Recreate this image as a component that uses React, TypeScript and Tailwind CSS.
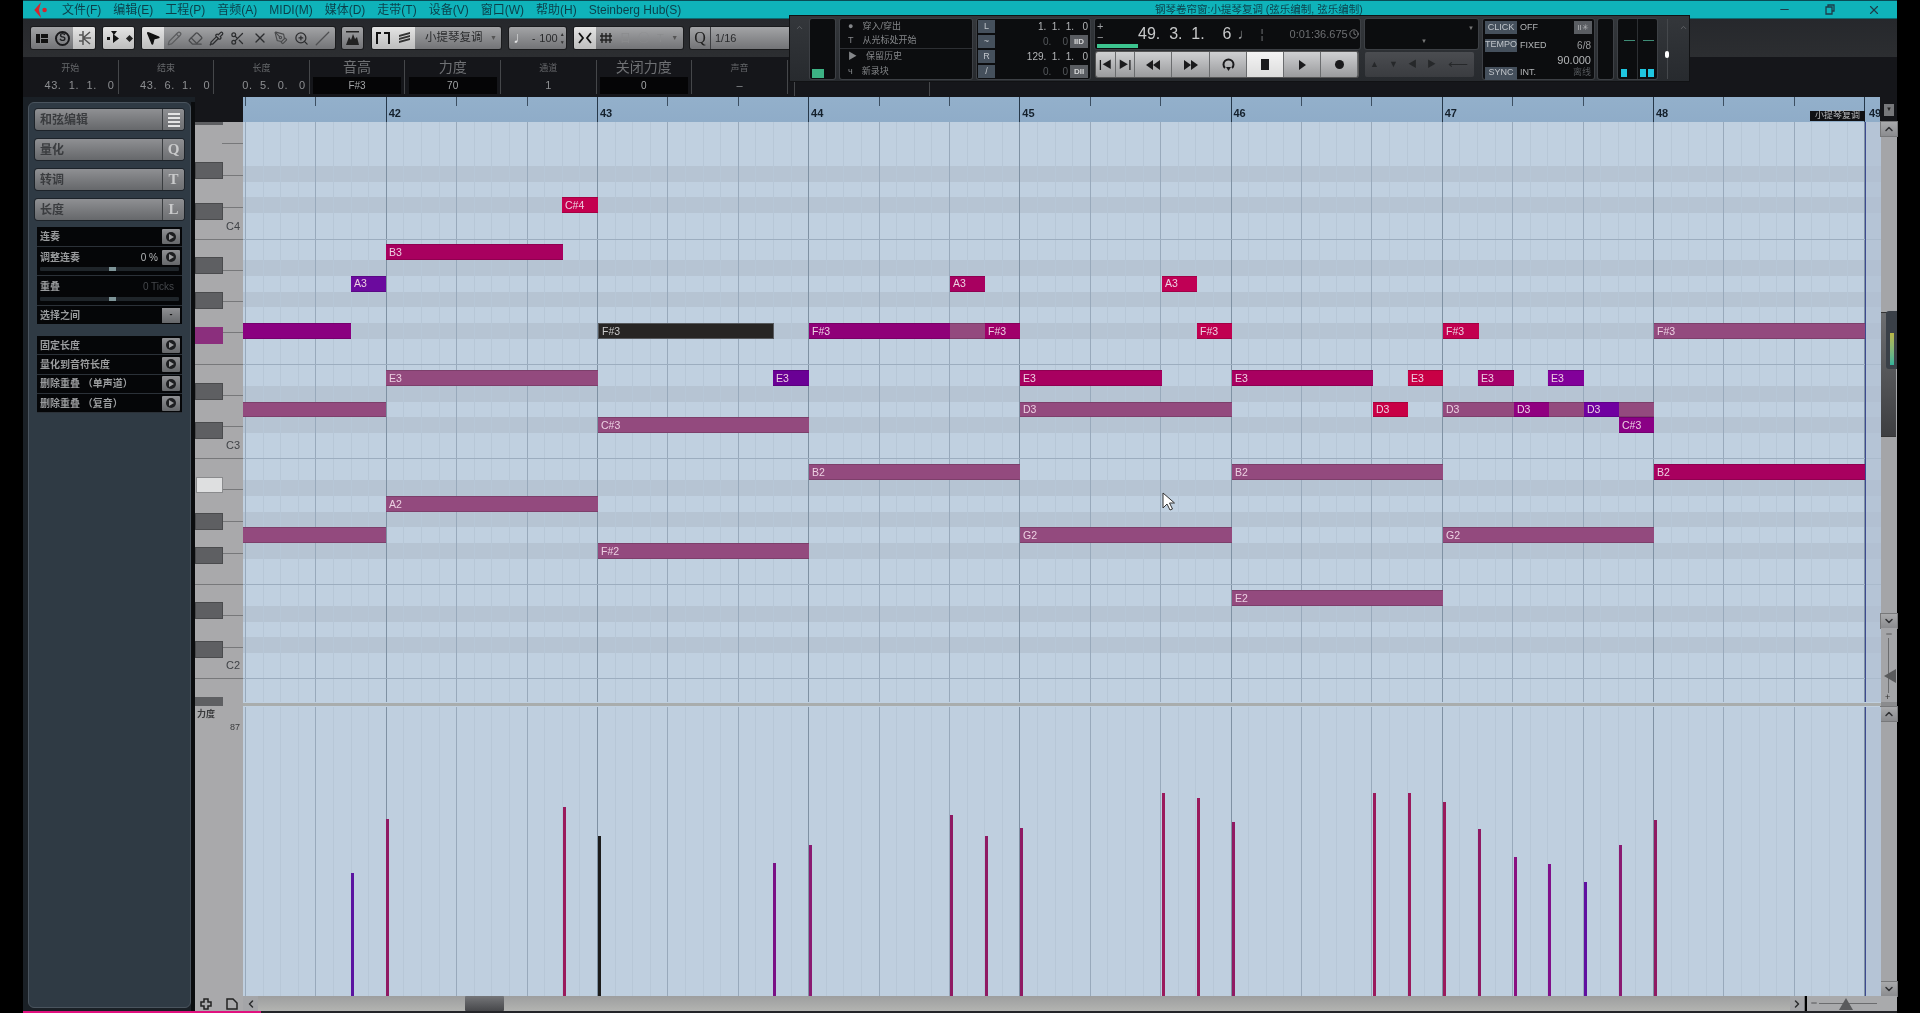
import React from "react";
import {
  ChevronDown,
  ChevronLeft,
  ChevronRight,
  ChevronUp,
  Eraser,
  MousePointer2,
  Pencil,
  Pipette,
  Scissors,
  Slash,
  X,
  ZoomIn,
  PenTool,
  Minus,
  Clock,
} from "lucide-react";

const FONT = { fontFamily: '"Liberation Sans", "Noto Sans CJK SC", sans-serif' };

const GRID_LEFT = 243;
const GRID_TOP = 122;
const ROW = 15.72;
const ROW_ZERO = 323;
const BAR_42 = 385.7;
const BAR = 211.2;
const SIXTEENTH = BAR / 12;

const PALE = "#934a7e";

const menus = ["文件(F)", "编辑(E)", "工程(P)", "音频(A)", "MIDI(M)", "媒体(D)", "走带(T)", "设备(V)", "窗口(W)", "帮助(H)", "Steinberg Hub(S)"];

const notes: { n: number; a: number; b: number; t?: string; c: string }[] = [
  { n: -8, a: 562, b: 598, t: "C#4", c: "#c4004f" },
  { n: -5, a: 386, b: 563, t: "B3", c: "#a8005f" },
  { n: -3, a: 351, b: 386, t: "A3", c: "#6b0a9e" },
  { n: -3, a: 950, b: 985, t: "A3", c: "#a80060" },
  { n: -3, a: 1162, b: 1197, t: "A3", c: "#c00055" },
  { n: 0, a: 243, b: 351, c: "#8a0080" },
  { n: 0, a: 809, b: 950, t: "F#3", c: "#8f0078" },
  { n: 0, a: 950, b: 985, c: PALE },
  { n: 0, a: 985, b: 1020, t: "F#3", c: "#a0006a" },
  { n: 0, a: 1197, b: 1232, t: "F#3", c: "#c00050" },
  { n: 0, a: 1443, b: 1479, t: "F#3", c: "#c2004f" },
  { n: 0, a: 1654, b: 1865, t: "F#3", c: PALE },
  { n: 3, a: 386, b: 598, t: "E3", c: PALE },
  { n: 3, a: 773, b: 809, t: "E3", c: "#6a0095" },
  { n: 3, a: 1020, b: 1162, t: "E3", c: "#a80060" },
  { n: 3, a: 1232, b: 1373, t: "E3", c: "#a80060" },
  { n: 3, a: 1408, b: 1443, t: "E3", c: "#c80045" },
  { n: 3, a: 1478, b: 1514, t: "E3", c: "#a5006a" },
  { n: 3, a: 1548, b: 1584, t: "E3", c: "#82009a" },
  { n: 5, a: 243, b: 386, c: PALE },
  { n: 5, a: 1020, b: 1232, t: "D3", c: PALE },
  { n: 5, a: 1373, b: 1408, t: "D3", c: "#c80045" },
  { n: 5, a: 1443, b: 1654, t: "D3", c: PALE },
  { n: 5, a: 1514, b: 1549, t: "D3", c: "#900080" },
  { n: 5, a: 1584, b: 1619, t: "D3", c: "#7000a0" },
  { n: 6, a: 598, b: 809, t: "C#3", c: PALE },
  { n: 6, a: 1619, b: 1654, t: "C#3", c: "#8a0085" },
  { n: 9, a: 809, b: 1020, t: "B2", c: PALE },
  { n: 9, a: 1232, b: 1443, t: "B2", c: PALE },
  { n: 9, a: 1654, b: 1865, t: "B2", c: "#a8005f" },
  { n: 11, a: 386, b: 598, t: "A2", c: PALE },
  { n: 13, a: 243, b: 386, c: PALE },
  { n: 13, a: 1020, b: 1232, t: "G2", c: PALE },
  { n: 13, a: 1443, b: 1654, t: "G2", c: PALE },
  { n: 14, a: 598, b: 809, t: "F#2", c: PALE },
  { n: 17, a: 1232, b: 1443, t: "E2", c: PALE },
];

const bars: { x: number; top: number; c: string }[] = [
  { x: 351, top: 873, c: "#5b14a0" },
  { x: 386, top: 819, c: "#8f1a63" },
  { x: 563, top: 807, c: "#9a1a5c" },
  { x: 598, top: 836, c: "#1c1c1c" },
  { x: 773, top: 863, c: "#7a1085" },
  { x: 809, top: 845, c: "#8a1a72" },
  { x: 950, top: 815, c: "#8f1a63" },
  { x: 985, top: 836, c: "#8f1a63" },
  { x: 1020, top: 828, c: "#8f1a63" },
  { x: 1162, top: 793, c: "#9a1a5c" },
  { x: 1197, top: 798, c: "#9a1a5c" },
  { x: 1232, top: 822, c: "#8f1a63" },
  { x: 1373, top: 793, c: "#9a1a5c" },
  { x: 1408, top: 793, c: "#9a1a5c" },
  { x: 1443, top: 802, c: "#9a1a5c" },
  { x: 1478, top: 829, c: "#8f1a63" },
  { x: 1514, top: 857, c: "#8a1080" },
  { x: 1548, top: 864, c: "#80108a" },
  { x: 1584, top: 882, c: "#6010a0" },
  { x: 1619, top: 845, c: "#8a1a72" },
  { x: 1654, top: 820, c: "#8f1a63" },
];

const bandRows = [-10, -8, -4, -2, 0, 4, 6, 10, 12, 14, 18, 20];
const longLines = [239, 364, 457.5, 584, 678];
const shortLines = [143, 175, 207, 270, 301, 332, 395, 426, 489, 521, 553, 615, 647];
const blackKeys = [162, 203, 257, 292, 383, 422, 513, 547, 602, 641];

const sixteenths = Array.from({ length: 93 }, (_, i) => i);

function GridLines({ height }: { height: number }) {
  return (
    <>
      {sixteenths.map((i) => {
        const x = BAR_42 - 2 * 4 * SIXTEENTH + i * SIXTEENTH - GRID_LEFT;
        if (x < 0 || x > 1622) return null;
        const isBar = i % 12 === 8;
        const isBeat = i % 4 === 0;
        return (
          <div
            key={i}
            className={`absolute top-0 w-px ${isBar ? "bg-[#7f91a3]" : isBeat ? "bg-[#98a9bb]" : "bg-[#b7c7d7]"}`}
            style={{ left: x, height }}
          />
        );
      })}
    </>
  );
}

function Seg({ light, w, children }: { light?: boolean; w?: string; children?: React.ReactNode }) {
  return (
    <div
      className={`flex h-full items-center justify-center ${w ?? ""} ${
        light ? "bg-linear-to-b from-[#e4e4e4] to-[#bdbdbd]" : ""
      }`}
    >
      {children}
    </div>
  );
}

function ToolGroup({ w, children }: { w: string; children: React.ReactNode }) {
  return (
    <div className={`flex h-[22px] shrink-0 items-center overflow-hidden rounded-[2px] bg-linear-to-b from-[#a3a4a6] to-[#737477] shadow-[0_0_0_1px_#1a1b1d] ${w}`}>
      {children}
    </div>
  );
}

function InfoCol({ label, big, value, boxed }: { label: string; big?: boolean; value: string; boxed?: boolean }) {
  return (
    <div className="relative flex h-[34px] w-[95.6px] shrink-0 flex-col items-center justify-between border-r border-[#45474a]">
      <span className={big ? "-mt-[1px] text-[14px] leading-[17px] text-[#6f7174]" : "mt-[3px] text-[9px] leading-[11px] text-[#66686b]"}>{label}</span>
      {boxed ? (
        <div className="flex h-[17px] w-[88px] items-center justify-center bg-[#050506] text-[10px] text-[#a4a6a8]">{value}</div>
      ) : (
        <div className="flex h-[17px] w-full items-center justify-center whitespace-pre text-[11px] text-[#8d8f92]">{value}</div>
      )}
    </div>
  );
}

function TimeCol({ label, value }: { label: string; value: string }) {
  return (
    <div className="flex h-[34px] w-[95.6px] shrink-0 flex-col items-center justify-between border-r border-[#45474a]">
      <span className="mt-[3px] text-[9px] leading-[11px] text-[#66686b]">{label}</span>
      <div className="flex h-[17px] w-full items-center justify-end whitespace-pre pr-[3px] text-[11px] tracking-[0.6px] text-[#8d8f92]">{value}</div>
    </div>
  );
}

function InspectorButton({ label, icon }: { label: string; icon: React.ReactNode }) {
  return (
    <div className="flex h-[21px] w-[149px] shrink-0 overflow-hidden rounded-[3px] bg-linear-to-b from-[#8f9093] to-[#66686b] shadow-[0_0_0_1px_#1d2329]">
      <div className="flex flex-1 items-center pl-[5px] text-[12px] font-bold text-[#3a3c3f]">{label}</div>
      <div className="flex w-[22px] items-center justify-center border-l border-[#3a3d40] bg-linear-to-b from-[#8e8f92] to-[#6d6f72] font-['Liberation_Serif',serif] text-[15px] font-bold text-[#c9cacb]">
        {icon}
      </div>
    </div>
  );
}

function PlayBtn() {
  return (
    <div className="flex h-[15px] w-[18px] items-center justify-center rounded-[1px] bg-linear-to-b from-[#8f9093] to-[#66686b]">
      <div className="flex h-[10px] w-[10px] items-center justify-center rounded-full bg-[#1d1e20]">
        <div className="ml-[1px] h-0 w-0 border-y-[3px] border-l-[5px] border-y-transparent border-l-[#9a9b9d]" />
      </div>
    </div>
  );
}

function SectionRow({ label, btn = true, h = "h-[19.3px]" }: { label: string; btn?: boolean; h?: string }) {
  return (
    <div className={`flex items-center justify-between border-b border-[#2b3138] pr-[2px] pl-[3px] ${h}`}>
      <span className="text-[10px] font-bold text-[#9a9c9e]">{label}</span>
      {btn && <PlayBtn />}
    </div>
  );
}

function SliderTrack() {
  return (
    <div className="relative mx-[3px] h-[4px] rounded-[1px] bg-[#1f252a]">
      <div className="absolute top-0 left-[69px] h-[4px] w-[7px] bg-[#7d9498]" />
    </div>
  );
}

function Box({ className, children }: { className: string; children?: React.ReactNode }) {
  return <div className={`shrink-0 rounded-[2px] bg-[#0c0d0f] shadow-[0_0_0_1px_#3d4045] ${className}`}>{children}</div>;
}

function SmallBtn({ label, w = "w-[17px]" }: { label: string; w?: string }) {
  return (
    <div className={`flex h-[13px] items-center justify-center bg-[#45505c] text-[9px] text-[#c0c5ca] ${w}`}>{label}</div>
  );
}

function LocRow({ label, value, dim, btn }: { label: string; value: string; dim?: boolean; btn?: string }) {
  return (
    <div className="flex h-[14px] items-center gap-[2px] pr-[2px] pl-[1px]">
      <SmallBtn label={label} />
      <span className={`flex-1 whitespace-pre text-right text-[10px] ${dim ? "text-[#55585c]" : "text-[#b4b6b8]"}`}>{value}</span>
      {btn && <div className="flex h-[13px] w-[18px] items-center justify-center bg-[#5a5d62] text-[8px] font-bold text-[#d6d7d8]">{btn}</div>}
    </div>
  );
}

function TransportCell({ w, light, children }: { w: string; light?: boolean; children: React.ReactNode }) {
  return (
    <div
      className={`flex h-full items-center justify-center border-r border-[#6a6c6e] text-[#1a1a1c] ${w} ${
        light ? "bg-linear-to-b from-[#f4f4f4] to-[#dcdcdc]" : "bg-linear-to-b from-[#cfd0d2] to-[#9a9b9d]"
      }`}
    >
      {children}
    </div>
  );
}

function Tri({ dir = "right" }: { dir?: "left" | "right" }) {
  return dir === "right" ? (
    <div className="h-0 w-0 border-y-[5px] border-l-[7px] border-y-transparent border-l-[#1a1a1c]" />
  ) : (
    <div className="h-0 w-0 border-y-[5px] border-r-[7px] border-y-transparent border-r-[#1a1a1c]" />
  );
}

function Transport() {
  return (
    <div className="absolute top-[15px] left-[789px] flex h-[67px] w-[901px] gap-[5px] border border-[#111214] bg-linear-to-b from-[#34373b] to-[#272a2e] pt-[3px] pl-[3px] text-[#b4b6b8]">
      <div className="flex w-[12px] shrink-0 justify-center pt-[4px]">
        <ChevronUp size={9} className="text-[#6a6c70]" />
      </div>
      <Box className="flex h-[60px] w-[25px] items-end justify-start pb-[1px] pl-[2px]">
        <div className="h-[9px] w-[12px] bg-[#3db284]" />
      </Box>
      <Box className="flex h-[60px] w-[132px] flex-col text-[9px] text-[#85878a]">
        <div className="flex h-[30px] flex-col justify-center gap-[1px] border-b border-[#2d2f33] pl-[8px]">
          <div className="flex gap-[9px]">
            <span>●</span>
            <span>穿入/穿出</span>
          </div>
          <div className="flex gap-[9px]">
            <span>T</span>
            <span>从光标处开始</span>
          </div>
        </div>
        <div className="flex flex-1 flex-col justify-center gap-[1px] pl-[8px]">
          <div className="flex gap-[9px]">
            <span>▶</span>
            <span>保留历史</span>
          </div>
          <div className="flex gap-[9px]">
            <span>ч</span>
            <span>新录块</span>
          </div>
        </div>
      </Box>
      <Box className="flex h-[60px] w-[113px] flex-col justify-center gap-[1px]">
        <LocRow label="L" value="1.  1.  1.   0" />
        <LocRow label="~" value="0.    0" dim btn="IID" />
        <LocRow label="R" value="129.  1.  1.   0" />
        <LocRow label="/" value="0.    0" dim btn="DII" />
      </Box>
      <div className="flex w-[265px] shrink-0 flex-col gap-[3px]">
        <Box className="relative flex h-[30px] items-center">
          <div className="ml-[2px] flex w-[40px] flex-col text-[11px] leading-[11px] text-[#a0a2a4]">
            <span>+</span>
            <span>−</span>
            <div className="mt-[1px] h-[4px] w-[41px] bg-[#3cc48f]" />
          </div>
          <span className="ml-[1px] whitespace-pre text-[16px] text-[#c8c9ca]">49.  3.  1.    6</span>
          <span className="ml-[6px] text-[15px] text-[#9a9c9e]">♩</span>
          <span className="ml-[8px] text-[12px] text-[#6d6f72]">¦</span>
          <span className="ml-[26px] text-[11px] text-[#6d6f72]">0:01:36.675</span>
          <Clock size={10} className="ml-[1px] text-[#8a8c8e]" />
        </Box>
        <div className="ml-[1px] flex h-[25px] w-[262px] overflow-hidden rounded-[2px] shadow-[0_0_0_1px_#555]">
          <TransportCell w="w-[20px]">
            <span className="text-[10px] font-bold">|◀</span>
          </TransportCell>
          <TransportCell w="w-[19px]">
            <span className="text-[10px] font-bold">▶|</span>
          </TransportCell>
          <TransportCell w="w-[37px]">
            <Tri dir="left" />
            <Tri dir="left" />
          </TransportCell>
          <TransportCell w="w-[38px]">
            <Tri />
            <Tri />
          </TransportCell>
          <TransportCell w="w-[37px]">
            <svg width="15" height="14" viewBox="0 0 15 14" fill="none" stroke="#1a1a1c" strokeWidth="2">
              <path d="M4 10a5 5 0 1 1 7 0" />
              <path d="M5 9l2.5 4L10 9z" fill="#1a1a1c" stroke="none" />
            </svg>
          </TransportCell>
          <TransportCell w="w-[37px]" light>
            <div className="h-[11px] w-[8px] bg-[#1a1a1c]" />
          </TransportCell>
          <TransportCell w="w-[37px]">
            <Tri />
          </TransportCell>
          <TransportCell w="w-[37px]">
            <div className="h-[9px] w-[9px] rounded-full bg-[#1a1a1c]" />
          </TransportCell>
        </div>
      </div>
      <div className="flex w-[113px] shrink-0 flex-col gap-[3px]">
        <Box className="relative h-[30px]">
          <span className="absolute top-[5px] right-[4px] text-[6px] text-[#777]">▼</span>
          <span className="absolute top-[18px] left-[56px] text-[6px] text-[#777]">▼</span>
        </Box>
        <div className="flex h-[25px] w-[109px] items-center rounded-[2px] bg-linear-to-b from-[#4b4d51] to-[#3a3c40] text-[#26282a]">
          {["▲", "▼", "◀", "▶"].map((g) => (
            <span key={g} className="w-[19px] text-center text-[9px]">
              {g}
            </span>
          ))}
          <span className="flex-1 text-center text-[14px]">⟵</span>
        </div>
      </div>
      <Box className="flex h-[60px] w-[111px] flex-col pt-[2px] text-[9px]">
        <div className="flex h-[14px] items-center gap-[3px] pl-[2px]">
          <SmallBtn label="CLICK" w="w-[32px]" />
          <span>OFF</span>
          <div className="ml-auto mr-[2px] flex h-[13px] w-[18px] items-center justify-center bg-[#5a5d62] text-[8px]">II✳</div>
        </div>
        <div className="mt-[4px] flex items-start gap-[3px] pl-[2px]">
          <SmallBtn label="TEMPO" w="w-[32px]" />
          <span className="flex-1">FIXED</span>
          <div className="mr-[3px] flex flex-col items-end text-[11px] leading-[14px]">
            <span className="text-[10px] text-[#9a9c9e]">6/8</span>
            <span>90.000</span>
          </div>
        </div>
        <div className="mt-auto mb-[1px] flex h-[13px] items-center gap-[3px] pl-[2px]">
          <SmallBtn label="SYNC" w="w-[32px]" />
          <span>INT.</span>
          <span className="ml-auto mr-[3px] text-[#55585c]">离线</span>
        </div>
      </Box>
      <Box className="-ml-[1px] h-[60px] w-[15px]" />
      <Box className="relative flex h-[60px] w-[39px] items-end gap-[2px] pb-[2px] pl-[3px]">
        <div className="absolute top-0 left-[19px] h-[60px] w-px bg-[#2d2f33]" />
        <div className="absolute top-[21px] left-[6px] h-px w-[11px] bg-[#3f8d77]" />
        <div className="absolute top-[21px] left-[25px] h-px w-[11px] bg-[#3f8d77]" />
        <div className="h-[8px] w-[6px] bg-[#1fc6e0]" />
        <div className="ml-[11px] h-[8px] w-[6px] bg-[#1fc6e0]" />
        <div className="h-[8px] w-[6px] bg-[#1fc6e0]" />
      </Box>
      <div className="relative flex w-[10px] shrink-0 justify-center">
        <div className="h-[60px] w-px bg-[#45484c]" />
        <div className="absolute top-[32px] h-[7px] w-[4px] rounded-full bg-white" />
      </div>
      <div className="flex w-[12px] shrink-0 justify-center pt-[4px]">
        <ChevronUp size={9} className="text-[#6a6c70]" />
      </div>
    </div>
  );
}

function ScrollArrow({ up }: { up?: boolean }) {
  return (
    <div className="flex h-[14px] shrink-0 items-center justify-center bg-linear-to-b from-[#a9aaac] to-[#8b8c8f] shadow-[0_0_0_1px_#77787a]">
      {up ? <ChevronUp size={12} strokeWidth={3} className="text-[#2f3033]" /> : <ChevronDown size={12} strokeWidth={3} className="text-[#2f3033]" />}
    </div>
  );
}

export default function App() {
  return (
    <div className="relative flex h-[1013px] w-[1920px] overflow-hidden bg-black blur-[0.5px]" style={FONT}>
      <div className="ml-[23px] flex w-[1874px] flex-col">
        {/* title bar */}
        <div className="relative flex h-[19px] shrink-0 items-center border-t border-[#0a4b55] border-b border-b-[#0e6a72] bg-[#0fb3ba] pl-[9px] text-[12px] text-[#0c3f4a]">
          <svg width="16" height="16" viewBox="0 0 14 14" className="shrink-0">
            <path d="M8 0L2 7l6 7-2-7z" fill="#d6262e" />
            <circle cx="11" cy="7" r="2" fill="#d6262e" />
          </svg>
          <div className="ml-[14px] flex gap-[12px]">
            {menus.map((m) => (
              <span key={m}>{m}</span>
            ))}
          </div>
          <span className="absolute left-[1132px] text-[10.5px]">钢琴卷帘窗:小提琴复调 (弦乐编制, 弦乐编制)</span>
          <div className="ml-auto mr-[16px] flex items-center gap-[32px] text-[#1d3d4a]">
            <Minus size={13} />
            <svg width="12" height="12" viewBox="0 0 12 12" fill="none" stroke="currentColor" strokeWidth="1.3">
              <path d="M3 3h6v7H3zM5 3V1h6v6H9" />
            </svg>
            <X size={14} />
          </div>
        </div>

        {/* toolbar */}
        <div className="flex h-[38px] shrink-0 gap-[8px] bg-linear-to-b from-[#26282c] to-[#2c2e31] pt-[8px] pl-[8px] text-[#1f2022]">
          <ToolGroup w="w-[64px]">
            <Seg w="w-[21px]">
              <div className="flex gap-[1px]">
                <div className="h-[9px] w-[4px] bg-[#111]" />
                <div className="flex w-[7px] flex-col justify-between">
                  <div className="h-[4px] bg-[#111]" />
                  <div className="h-[4px] bg-[#111]" />
                </div>
              </div>
            </Seg>
            <Seg w="w-[21px]">
              <div className="flex h-[15px] w-[15px] items-center justify-center rounded-full border-2 border-[#1a1a1c] text-[10px] font-bold leading-none">S</div>
            </Seg>
            <Seg light w="w-[22px]">
              <svg width="15" height="16" viewBox="0 0 15 16" fill="none" stroke="#555" strokeWidth="1.5">
                <path d="M6 1v14M6 8l7-6M6 8h8M6 8l7 6M2 5h4M2 11h4" />
              </svg>
            </Seg>
          </ToolGroup>
          <ToolGroup w="w-[31px]">
            <Seg light w="w-[21px]">
              <svg width="16" height="16" viewBox="0 0 16 16" fill="#111">
                <path d="M5 1h6L8 5zM1 7h3v3H1zM7 4v9l6-4.5z" />
              </svg>
            </Seg>
            <Seg light w="w-[10px]">
              <div className="h-[5px] w-[5px] rotate-45 bg-[#222]" />
            </Seg>
          </ToolGroup>
          <ToolGroup w="w-[193px]">
            <Seg light w="w-[22px]">
              <MousePointer2 size={16} fill="#111" className="text-[#111]" />
            </Seg>
            <div className="flex flex-1 items-center justify-around pr-[2px] text-[#2c2d2f]">
              <Pencil size={15} className="text-[#5b5c5e]" />
              <Eraser size={15} className="text-[#4a4b4d]" />
              <Pipette size={15} />
              <Scissors size={15} />
              <X size={16} />
              <PenTool size={14} className="text-[#4a4b4d]" />
              <ZoomIn size={15} />
              <Slash size={15} className="text-[#4e4f51]" />
            </div>
          </ToolGroup>
          <div className="-ml-[1px] flex h-[22px] w-[21px] shrink-0 items-end justify-center overflow-hidden rounded-[2px] bg-linear-to-b from-[#a3a4a6] to-[#737477] pb-[3px] shadow-[0_0_0_1px_#1a1b1d]">
            <svg width="15" height="16" viewBox="0 0 15 16" fill="#222">
              <path d="M1 1h13v1.5H1zM1 15l3-8 2 3 2-6 2 5 2-2 2 8z" />
            </svg>
          </div>
          <div className="ml-[1px]">
            <ToolGroup w="w-[129px]">
              <Seg light w="w-[22px]">
                <svg width="14" height="14" viewBox="0 0 14 14" fill="none" stroke="#111" strokeWidth="2">
                  <path d="M1 13V2h4M8 2h5v11" />
                </svg>
              </Seg>
              <Seg light w="w-[21px]">
                <svg width="14" height="12" viewBox="0 0 14 12" fill="#333">
                  <path d="M1 3l11-3v2L1 5zM1 6l11-3v2L1 8zM1 9l11-3v2l-11 3z" />
                </svg>
              </Seg>
              <span className="ml-[10px] flex-1 text-[11.5px] text-[#2a2b2d]">小提琴复调</span>
              <span className="mr-[4px] text-[7px] text-[#555]">▼</span>
            </ToolGroup>
          </div>
          <ToolGroup w="w-[57px]">
            <span className="ml-[4px] text-[16px] leading-none text-[#e2e3e4]">♩</span>
            <span className="ml-[3px] text-[10px]">-</span>
            <span className="ml-[4px] text-[11px] text-[#2a2b2d]">100</span>
            <div className="ml-[2px] flex flex-col text-[5px] leading-[8px] text-[#333]">
              <span>▲</span>
              <span>▼</span>
            </div>
          </ToolGroup>
          <ToolGroup w="w-[109px]">
            <Seg light w="w-[22px]">
              <svg width="14" height="12" viewBox="0 0 14 12" fill="none" stroke="#111" strokeWidth="1.8">
                <path d="M1 1l4 5-4 5M13 1L9 6l4 5" />
              </svg>
            </Seg>
            <Seg w="w-[20px]">
              <svg width="14" height="12" viewBox="0 0 14 12" fill="none" stroke="#222" strokeWidth="1.4">
                <path d="M1 4h12M1 8h12M3 1v10M7 1v10M11 1v10" />
              </svg>
            </Seg>
            <div className="flex flex-1 items-center justify-around pr-[1px] text-[11px] text-[#8b8c8e]">
              <span>日</span>
              <span>◯</span>
              <span>T</span>
              <span className="text-[7px] text-[#555]">▼</span>
            </div>
          </ToolGroup>
          <div className="-ml-[1px]">
            <ToolGroup w="w-[101px]">
              <div className="flex h-full w-[21px] items-center justify-center border-r border-[#3e3f42] font-['Liberation_Serif',serif] text-[16px] text-[#222]">Q</div>
              <span className="ml-[4px] text-[11px] text-[#2a2b2d]">1/16</span>
            </ToolGroup>
          </div>
        </div>

        {/* info line */}
        <div className="flex h-[40px] shrink-0 items-start bg-[#15161a] pt-[3px]">
          <TimeCol label="开始" value="43.  1.  1.   0" />
          <TimeCol label="结束" value="43.  6.  1.   0" />
          <TimeCol label="长度" value="0.  5.  0.   0" />
          <InfoCol label="音高" big boxed value="F#3" />
          <InfoCol label="力度" big boxed value="70" />
          <InfoCol label="通道" value="1" />
          <InfoCol label="关闭力度" big boxed value="0" />
          <InfoCol label="声音" value="–" />
          <div className="mt-[22px] ml-[6px] h-[14px] w-[136px] border-x border-[#45474a]" />
        </div>

        {/* main */}
        <div className="flex min-h-0 flex-1">
          {/* inspector */}
          <div className="flex w-[172px] shrink-0 bg-[#1a2026] pt-[5px] pl-[5px]">
            <div className="flex h-[906px] w-[163px] flex-col items-center gap-[9px] rounded-[6px] border border-[#4a545e] bg-[#2f3a44] pt-[6px]">
              <InspectorButton
                label="和弦编辑"
                icon={
                  <div className="flex w-[12px] flex-col gap-[2px]">
                    <div className="h-[2px] bg-[#e4e4e4]" />
                    <div className="h-[2px] bg-[#e4e4e4]" />
                    <div className="h-[2px] bg-[#e4e4e4]" />
                    <div className="h-[2px] bg-[#e4e4e4]" />
                  </div>
                }
              />
              <InspectorButton label="量化" icon="Q" />
              <InspectorButton label="转调" icon="T" />
              <InspectorButton label="长度" icon="L" />
              <div className="-mt-[2px] flex w-[145px] flex-col bg-[#050608]">
                <SectionRow label="连奏" h="h-[20px]" />
                <div className="flex h-[29px] flex-col border-b border-[#2b3138]">
                  <div className="flex h-[20px] items-center justify-between pr-[2px] pl-[3px]">
                    <span className="text-[10px] font-bold text-[#9a9c9e]">调整连奏</span>
                    <div className="flex items-center gap-[4px]">
                      <span className="text-[10px] text-[#b4b6b8]">0 %</span>
                      <PlayBtn />
                    </div>
                  </div>
                  <SliderTrack />
                </div>
                <div className="flex h-[30px] flex-col border-b border-[#2b3138]">
                  <div className="flex h-[21px] items-center justify-between pr-[8px] pl-[3px]">
                    <span className="text-[10px] font-bold text-[#9a9c9e]">重叠</span>
                    <span className="text-[10px] text-[#45484c]">0 Ticks</span>
                  </div>
                  <SliderTrack />
                </div>
                <div className="flex h-[18px] items-center justify-between pr-[2px] pl-[3px]">
                  <span className="text-[10px] font-bold text-[#9a9c9e]">选择之间</span>
                  <div className="flex h-[15px] w-[18px] items-center justify-center bg-linear-to-b from-[#8f9093] to-[#66686b] text-[9px] font-bold text-[#111]">-</div>
                </div>
              </div>
              <div className="mt-[3px] flex w-[145px] flex-col bg-[#050608]">
                <SectionRow label="固定长度" />
                <SectionRow label="量化到音符长度" />
                <SectionRow label="删除重叠 （单声道）" />
                <SectionRow label="删除重叠 （复音）" />
              </div>
            </div>
            <div className="h-full w-[4px] bg-[#0a0c0e]" />
          </div>

          {/* key editor */}
          <div className="flex min-w-0 flex-1 flex-col">
            {/* ruler */}
            <div className="flex h-[25px] shrink-0 bg-[#15161a]">
              <div className="w-[48px] shrink-0" />
              <div className="relative w-[1637px] shrink-0 bg-linear-to-b from-[#93b0cb] to-[#8facc8]">
                {sixteenths
                  .filter((i) => i % 4 === 0)
                  .map((i) => {
                    const x = BAR_42 - 2 * 4 * SIXTEENTH + i * SIXTEENTH - GRID_LEFT;
                    if (x < 0 || x > 1622) return null;
                    const isBar = i % 12 === 8;
                    return <div key={i} className={`absolute top-0 w-px ${isBar ? "h-[25px] bg-[#26384a]" : "h-[9px] bg-[#3c4f62]"}`} style={{ left: x }} />;
                  })}
                {[42, 43, 44, 45, 46, 47, 48].map((b, i) => (
                  <span key={b} className="absolute top-[8px] text-[11px] font-bold text-[#14202c]" style={{ left: BAR_42 + i * BAR - GRID_LEFT + 3 }}>
                    {b}
                  </span>
                ))}
                <span className="absolute top-[8px] left-[1626px] w-[11px] overflow-hidden text-[11px] font-bold text-[#14202c]">49</span>
                <div className="absolute top-[14px] left-[1567px] flex h-[10px] w-[55px] items-center justify-center bg-[#101114] text-[9px] text-[#b8babd]">小提琴复调</div>
              </div>
              <div className="flex flex-1 items-center justify-center pl-[1px]">
                <div className="flex h-[12px] w-[10px] items-center justify-center bg-[#77787b] text-[6px] text-[#222]">▼</div>
              </div>
            </div>

            {/* notes */}
            <div className="flex h-[580px] shrink-0">
              <div className="relative w-[48px] shrink-0 overflow-hidden bg-[#a9a9ab]">
                {shortLines.map((y) => (
                  <div key={y} className="absolute left-[27px] h-px w-[21px] bg-[#77787a]" style={{ top: y - GRID_TOP }} />
                ))}
                {longLines.map((y) => (
                  <div key={y} className="absolute left-0 h-px w-[48px] bg-[#77787a]" style={{ top: y - GRID_TOP }} />
                ))}
                <div className="absolute top-0 left-0 h-[3px] w-[28px] bg-[#5e5f62]" />
                {blackKeys.map((y) => (
                  <div key={y} className="absolute left-0 h-[17px] w-[28px] border border-[#4a4b4d] bg-[#5e5f62]" style={{ top: y - GRID_TOP }} />
                ))}
                <div className="absolute top-[205px] left-0 h-[17px] w-[28px] bg-[#8b2f7d]" />
                <div className="absolute top-[355px] left-[1px] h-[16px] w-[27px] border border-[#8a8b8d] bg-[#dedfe0]" />
                <div className="absolute top-[575px] left-0 h-[7px] w-[28px] bg-[#5e5f62]" />
                <span className="absolute top-[98px] right-[3px] text-[11px] leading-[13px] text-[#3f4246]">C4</span>
                <span className="absolute top-[317px] right-[3px] text-[11px] leading-[13px] text-[#3f4246]">C3</span>
                <span className="absolute top-[537px] right-[3px] text-[11px] leading-[13px] text-[#3f4246]">C2</span>
              </div>
              <div className="relative w-[1638px] shrink-0 overflow-hidden bg-[#c0d0e0]">
                {bandRows.map((n) => (
                  <div key={n} className="absolute left-0 w-full bg-[#b6c4d3]" style={{ top: ROW_ZERO + n * ROW - GRID_TOP, height: ROW }} />
                ))}
                <GridLines height={580} />
                {longLines.map((y) => (
                  <div key={y} className="absolute left-0 h-px w-full bg-[#9cadbf]" style={{ top: y - GRID_TOP }} />
                ))}
                <div className="absolute top-0 left-[1623px] h-full w-[15px] bg-[#b0bfd2]/70" />
                <div className="absolute top-0 left-[1622px] h-full w-px bg-[#3d4a90]" />
                {notes.map((note, i) => (
                  <div
                    key={i}
                    className="absolute flex items-center overflow-hidden border-y border-black/15 pl-[3px] text-[10.5px] leading-none text-[#ecd0e2]"
                    style={{
                      left: note.a - GRID_LEFT,
                      width: note.b - note.a,
                      top: ROW_ZERO + note.n * ROW - GRID_TOP,
                      height: ROW,
                      backgroundColor: note.c,
                    }}
                  >
                    {note.t}
                  </div>
                ))}
                <div className="absolute top-[201px] left-[355px] flex h-[16px] w-[176px] items-center border border-[#56595d] bg-[#272524] pl-[3px] text-[10.5px] leading-none text-[#c8c8c8]">F#3</div>
                <svg className="absolute top-[370px] left-[919px]" width="14" height="20" viewBox="0 0 14 20">
                  <path d="M1 1v15l4-4 3 6 2.5-1-3-6h5z" fill="#fff" stroke="#333" />
                </svg>
              </div>
              <div className="relative flex flex-1 flex-col bg-[#a4a5a8]">
                <ScrollArrow up />
                <div className="absolute top-[190px] left-0 h-[125px] w-[15px] border-y border-[#333] bg-linear-to-b from-[#6d6e71] to-[#3d3e41]" />
                <div className="absolute top-[189px] left-[5px] h-[58px] w-[11px] rounded-l-[3px] bg-[#3a4048]">
                  <div className="mt-[22px] ml-[4px] h-[32px] w-[4px] bg-linear-to-b from-[#b9b646] to-[#2fb39a]" />
                </div>
                <div className="mt-auto">
                  <ScrollArrow />
                  <div className="relative h-[74px] bg-[#a4a5a8]">
                    <Minus size={8} className="absolute top-[2px] left-[4px] text-[#333]" />
                    <div className="absolute top-[10px] left-[7px] h-[55px] w-px bg-[#6b6c6e]" />
                    <div className="absolute top-[41px] left-[3px] h-0 w-0 border-y-[7px] border-r-[12px] border-y-transparent border-r-[#595a5c]" />
                    <span className="absolute bottom-0 left-[4px] text-[9px] leading-[9px] text-[#333]">+</span>
                  </div>
                </div>
              </div>
            </div>

            {/* separator */}
            <div className="flex h-[5px] shrink-0">
              <div className="w-[48px] bg-[#a9a9ab]" />
              <div className="w-[1638px] border-y border-[#c0d0e0] bg-[#a9adad]" />
              <div className="flex-1 bg-[#8b8c8e]" />
            </div>

            {/* velocity lane */}
            <div className="flex h-[289px] shrink-0">
              <div className="relative w-[48px] shrink-0 bg-[#a9a9ab] text-[#3a3b3d]">
                <div className="absolute top-[-8px] left-0 h-[7px] w-[28px] bg-[#5e5f62]" />
                <span className="absolute top-[1px] left-[2px] text-[9px] font-bold">力度</span>
                <span className="absolute top-[14px] right-[3px] text-[9px]">87</span>
              </div>
              <div className="relative w-[1638px] shrink-0 overflow-hidden bg-[#bfcfdf]">
                <GridLines height={289} />
                <div className="absolute top-0 left-[1623px] h-full w-[15px] bg-[#b0bfd2]/70" />
                <div className="absolute top-0 left-[1622px] h-full w-px bg-[#3d4a90]" />
                {bars.map((b) => (
                  <div
                    key={b.x}
                    className="absolute bottom-0 w-[3px]"
                    style={{ left: b.x - GRID_LEFT, top: b.top - 707, backgroundColor: b.c }}
                  />
                ))}
              </div>
              <div className="flex flex-1 flex-col bg-[#a4a5a8]">
                <ScrollArrow up />
                <div className="flex-1" />
                <ScrollArrow />
              </div>
            </div>

            {/* bottom scroll */}
            <div className="flex h-[15px] shrink-0 text-[#2b2c2e]">
              <div className="flex w-[48px] shrink-0 items-center justify-between bg-[#a9a9ab] px-[5px]">
                <svg width="12" height="12" viewBox="0 0 12 12" fill="none" stroke="#222" strokeWidth="1.5">
                  <path d="M4 1h4v3h3v4H8v3H4V8H1V4h3z" />
                </svg>
                <svg width="12" height="12" viewBox="0 0 12 12" fill="none" stroke="#222" strokeWidth="1.5">
                  <path d="M1 1h6l4 4v6H1z" />
                </svg>
              </div>
              <div className="flex h-[15px] w-[15px] items-center justify-center bg-[#a4a5a8]">
                <ChevronLeft size={12} strokeWidth={3} />
              </div>
              <div className="relative w-[1532px] shrink-0 bg-linear-to-b from-[#9d9e9f] to-[#b3b4b1]">
                <div className="absolute top-0 left-[207px] h-[15px] w-[39px] rounded-[1px] bg-linear-to-b from-[#757679] to-[#47484b]" />
              </div>
              <div className="flex h-[15px] w-[14px] items-center justify-center bg-[#a4a5a8] shadow-[0_0_0_1px_#77787a]">
                <ChevronRight size={12} strokeWidth={3} />
              </div>
              <div className="relative ml-[3px] flex-1 bg-[#a9aaac]">
                <Minus size={8} className="absolute top-[3px] left-[3px]" />
                <div className="absolute top-[7px] left-[12px] h-px w-[58px] bg-[#6b6c6e]" />
                <div className="absolute top-[2px] left-[32px] h-0 w-0 border-x-[7px] border-b-[12px] border-x-transparent border-b-[#595a5c]" />
              </div>
            </div>

            <div className="flex-1 bg-[#232428]" />
          </div>
        </div>
      </div>

      {/* pink strip at the foot */}
      <div className="absolute bottom-0 left-[23px] h-[2px] w-[238px] bg-[#e0117f]" />
      <Transport />
    </div>
  );
}
